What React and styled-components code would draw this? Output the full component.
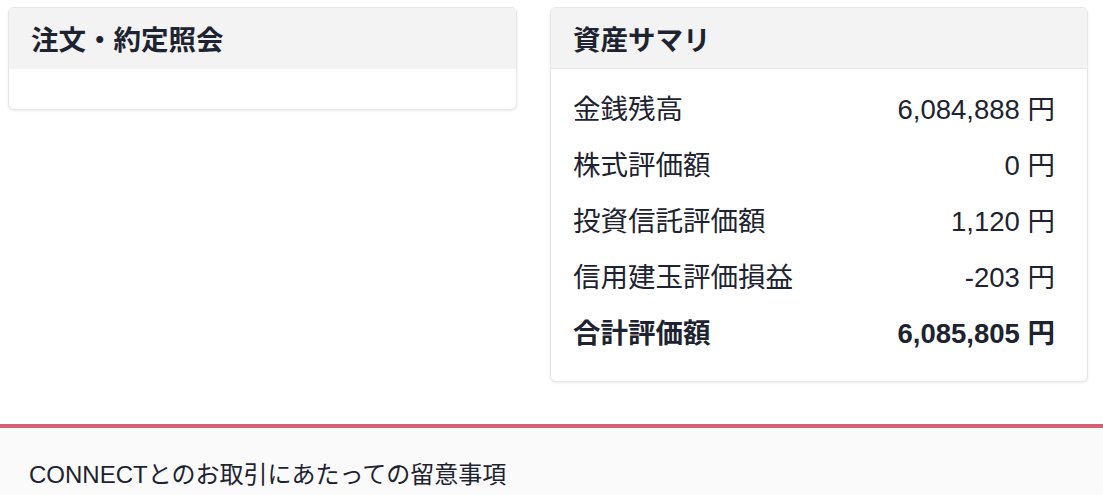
import React from 'react';
import styled, { createGlobalStyle } from 'styled-components';

const GlobalStyle = createGlobalStyle`
  html, body {
    margin: 0;
    padding: 0;
    background: #fff;
  }
  body {
    font-family: "Liberation Sans", Arial, "Noto Sans CJK JP", sans-serif;
    color: #1d2330;
  }
`;

const Page = styled.div`
  width: 1103px;
  height: 495px;
  overflow: hidden;
  display: flex;
  flex-direction: column;
`;

const Columns = styled.div`
  display: grid;
  grid-template-columns: 509px 538px;
  column-gap: 33px;
  align-items: start;
  padding: 7px 0 0 8px;
  height: 424px;
  box-sizing: border-box;
`;

const Card = styled.section`
  background: #fff;
  border: 1px solid #e6e6e6;
  border-radius: 6px;
  box-shadow: 0 1px 3px rgba(0, 0, 0, 0.08);
  overflow: hidden;
`;

const CardHeader = styled.h2`
  margin: 0;
  height: 61px;
  box-sizing: border-box;
  display: flex;
  align-items: center;
  padding: 0 22px;
  background: #f3f3f3;
  border-bottom: 1px solid ${({ $divider }) => ($divider ? '#e8e8e8' : '#f3f3f3')};
  font-size: 27.5px;
  font-weight: 700;
  color: #1d2330;
`;

const EmptyBody = styled.div`
  height: 40px;
`;

const SummaryList = styled.dl`
  margin: 0;
  padding: 10px 32px 22px 22px;
`;

const Row = styled.div`
  display: flex;
  justify-content: space-between;
  align-items: center;
  height: 56px;
  font-size: 27.5px;
  font-weight: ${({ $total }) => ($total ? 700 : 400)};
`;

const Label = styled.dt`
  margin: 0;
`;

const Value = styled.dd`
  margin: 0;
  text-align: right;
`;

const Footer = styled.footer`
  flex: 1;
  background: #fafafa;
  border-top: 4px solid #d75f73;
  padding: 27px 0 0 29px;
  font-size: 24px;
  color: #1d2330;
`;

const summary = [
  { label: '金銭残高', value: '6,084,888' },
  { label: '株式評価額', value: '0' },
  { label: '投資信託評価額', value: '1,120' },
  { label: '信用建玉評価損益', value: '-203' },
  { label: '合計評価額', value: '6,085,805', total: true },
];

const App = () => {
  return (
    <>
      <GlobalStyle />
      <Page>
        <Columns>
          <Card>
            <CardHeader>注文・約定照会</CardHeader>
            <EmptyBody />
          </Card>
          <Card>
            <CardHeader $divider>資産サマリ</CardHeader>
            <SummaryList>
              {summary.map((item) => (
                <Row key={item.label} $total={item.total}>
                  <Label>{item.label}</Label>
                  <Value>{item.value} 円</Value>
                </Row>
              ))}
            </SummaryList>
          </Card>
        </Columns>
        <Footer>CONNECTとのお取引にあたっての留意事項</Footer>
      </Page>
    </>
  );
};

export default App;
